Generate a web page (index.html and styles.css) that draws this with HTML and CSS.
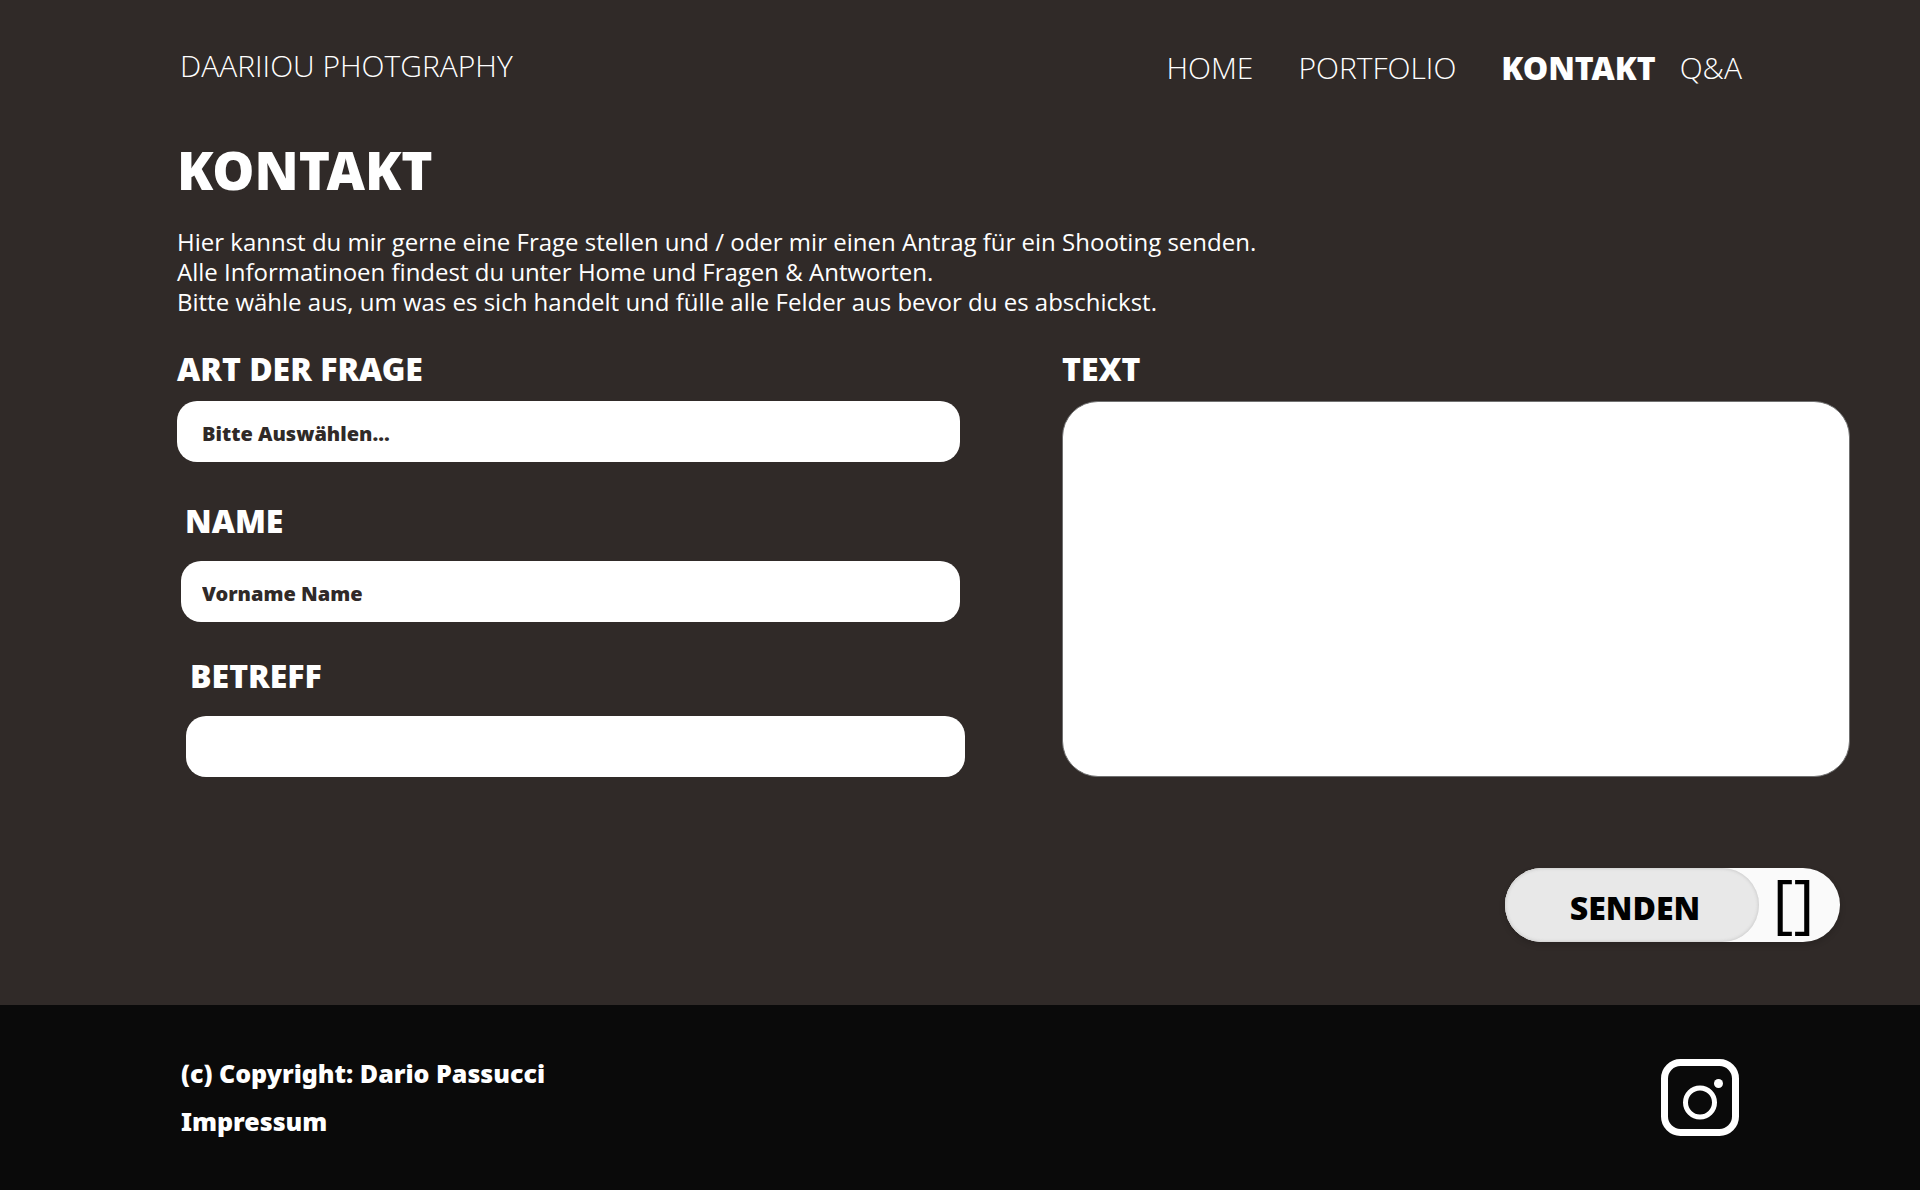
FILE: index.html
```html
<!DOCTYPE html>
<html lang="de">
<head>
<meta charset="utf-8">
<meta name="viewport" content="width=device-width, initial-scale=1">
<title>Kontakt – DAARIIOU PHOTGRAPHY</title>
<link rel="stylesheet" href="styles.css">
</head>
<body>
<header class="site-header">
  <a class="brand" href="#">DAARIIOU PHOTGRAPHY</a>
  <nav class="site-nav">
    <a class="nav-link" href="#">HOME</a>
    <a class="nav-link" href="#">PORTFOLIO</a>
    <a class="nav-link nav-link-current" href="#" aria-current="page">KONTAKT</a>
    <a class="nav-link" href="#">Q&amp;A</a>
  </nav>
</header>

<main class="content">
  <h1 class="page-title">KONTAKT</h1>
  <p class="intro">Hier kannst du mir gerne eine Frage stellen und / oder mir einen Antrag für ein Shooting senden.<br>Alle Informatinoen findest du unter Home und Fragen &amp; Antworten.<br>Bitte wähle aus, um was es sich handelt und fülle alle Felder aus bevor du es abschickst.</p>

  <form class="contact-form">
    <div class="fields">
      <div class="field field-kind">
        <label class="label" for="kind">ART DER FRAGE</label>
        <select class="control" id="kind">
          <option>Bitte Auswählen...</option>
        </select>
      </div>
      <div class="field field-name">
        <label class="label" for="name">NAME</label>
        <input class="control" id="name" type="text" placeholder="Vorname Name">
      </div>
      <div class="field field-subject">
        <label class="label" for="subject">BETREFF</label>
        <input class="control" id="subject" type="text">
      </div>
    </div>
    <div class="field field-message">
      <label class="label" for="message">TEXT</label>
      <textarea class="message" id="message"></textarea>
    </div>
    <button class="send" type="submit">
      <span class="send-text">SENDEN</span>
      <span class="send-icon">[]</span>
    </button>
  </form>
</main>

<footer class="site-footer">
  <div class="legal">
    <p class="legal-line">(c) Copyright: Dario Passucci</p>
    <a class="legal-line" href="#">Impressum</a>
  </div>
  <a class="social" href="#" aria-label="Instagram">
    <svg class="social-icon" viewBox="0 0 78 78" fill="none" stroke="#fff">
      <rect x="3.5" y="3.5" width="71" height="70" rx="16" stroke-width="7"/>
      <circle cx="39" cy="43.5" r="14.5" stroke-width="5"/>
      <circle cx="57.5" cy="24.5" r="4.5" fill="#fff" stroke="none"/>
    </svg>
  </a>
</footer>
</body>
</html>
```
FILE: styles.css
```css
* {
  box-sizing: border-box;
}

body {
  margin: 0;
  min-height: 100vh;
  display: flex;
  flex-direction: column;
  background: #302a28;
  color: #fff;
  font-family: "Open Sans", "Noto Sans", sans-serif;
}

a {
  color: inherit;
  text-decoration: none;
}

.site-header {
  display: flex;
  justify-content: space-between;
  align-items: flex-start;
  padding: 46px 178px 0 180px;
  font-size: 30px;
  font-weight: 300;
  line-height: 40px;
}

.site-nav {
  display: flex;
  padding-top: 2px;
}

.nav-link {
  margin-left: 45px;
}

.nav-link-current,
.page-title,
.label,
.control,
.send,
.legal-line {
  font-family: "Noto Sans", "Open Sans", sans-serif;
  font-weight: 900;
}

.nav-link-current {
  font-size: 32px;
}

.nav-link-current + .nav-link {
  margin-left: 24px;
}

.content {
  flex: 1;
  padding: 49px 70px 60px 177px;
}

.page-title {
  margin: 0;
  font-size: 53px;
  line-height: 66px;
}

.intro {
  margin: 24px 0 0;
  font-size: 24px;
  line-height: 30px;
}

.contact-form {
  display: grid;
  grid-template-columns: 1fr 1fr;
  column-gap: 97px;
  margin-top: 32px;
}

.fields {
  display: flex;
  flex-direction: column;
}

.field {
  display: flex;
  flex-direction: column;
}

.field-kind {
  margin-right: 5px;
}

.field-name {
  margin: 39px 5px 0 4px;
  gap: 8px;
}

.field-subject {
  margin: 34px 0 0 9px;
  gap: 8px;
}

.field-name .label,
.field-subject .label {
  padding-left: 4px;
}

.label {
  padding-bottom: 12px;
  font-size: 32px;
  line-height: 40px;
}

.control {
  appearance: none;
  width: 100%;
  height: 61px;
  padding: 4px 21px 0;
  border: 0;
  border-radius: 20px;
  background: #fff;
  color: #302a28;
  font-size: 20px;
}

.field-kind .control {
  padding-left: 25px;
}

.control::placeholder {
  color: #302a28;
  opacity: 1;
}

.message {
  flex: 1;
  padding: 20px 24px;
  border: 1px solid #707070;
  border-radius: 36px;
  background: #fff;
  color: #302a28;
  font-family: inherit;
  font-size: 20px;
  resize: none;
}

.send {
  grid-column: 2;
  justify-self: end;
  display: flex;
  width: 335px;
  height: 74px;
  margin: 91px 10px 0 0;
  padding: 0;
  border: 0;
  border-radius: 37px;
  background: #fafafa;
  color: #000;
  box-shadow: 0 3px 6px rgba(0, 0, 0, 0.16);
}

.send-text {
  width: 254px;
  padding: 3px 0 0 6px;
  border-radius: 37px;
  background: #e8e8e8;
  box-shadow: inset 0 0 3px 1px #cfcfcf;
  font-size: 32px;
  line-height: 74px;
}

.send-icon {
  flex: 1;
  padding-right: 12px;
  font-family: "Open Sans", "Noto Sans", sans-serif;
  font-size: 64px;
  font-weight: 400;
  line-height: 68px;
}

.site-footer {
  display: flex;
  justify-content: space-between;
  align-items: flex-start;
  padding: 50px 181px 51px;
  background: #0a0a0a;
}

.legal {
  display: flex;
  flex-direction: column;
  gap: 12px;
}

.legal-line {
  margin: 0;
  font-size: 25px;
  line-height: 36px;
}

.social-icon {
  display: block;
  width: 78px;
  height: 78px;
  margin-top: 4px;
}
```
